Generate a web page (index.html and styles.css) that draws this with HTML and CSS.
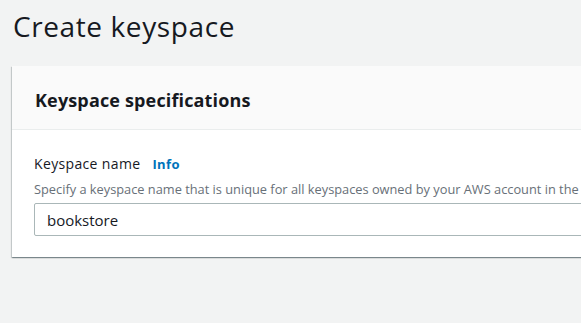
FILE: index.html
```html
<!DOCTYPE html>
<html>
<head>
<meta charset="utf-8">
<link rel="stylesheet" href="styles.css">
</head>
<body>
<div class="page">
  <h1 class="title">Create keyspace</h1>
  <div class="card">
    <div class="card-header"><h2>Keyspace specifications</h2></div>
    <div class="card-body">
      <div class="label-row"><span class="label">Keyspace name</span><a class="info">Info</a></div>
      <div class="desc">Specify a keyspace name that is unique for all keyspaces owned by your AWS account in the</div>
      <div class="input">bookstore</div>
    </div>
  </div>
</div>
</body>
</html>
```
FILE: styles.css
```css
html, body { margin: 0; padding: 0; }
body {
  background: #f2f3f3;
  font-family: "Open Sans", "Noto Sans", sans-serif;
  color: #16191f;
  width: 581px;
  height: 323px;
  overflow: hidden;
}
.page { padding: 6px 0 0 12px; }
.title {
  margin: 0 0 0 1px;
  font-size: 28px;
  font-weight: 400;
  line-height: 40px;
  letter-spacing: 0.6px;
}
.card {
  margin-top: 20px;
  width: 620px;
  background: #fff;
  box-shadow: 0 1px 1px 0 rgba(0,28,36,0.3), 1px 1px 1px 0 rgba(0,28,36,0.15), -1px 1px 1px 0 rgba(0,28,36,0.15);
}
.card-header {
  background: #fafafa;
  border-bottom: 1px solid #eaeded;
  box-sizing: content-box;
  display: flex;
  align-items: center;
  padding: 4px 0 0 23px;
  height: 59px;
}
.card-header h2 {
  margin: 0;
  font-size: 18px;
  font-weight: 700;
  line-height: 24px;
  letter-spacing: 0.15px;
}
.card-body { padding: 23px 0 21px 22px; }
.label-row { display: flex; align-items: baseline; gap: 12px; }
.label { font-size: 14px; line-height: 22px; letter-spacing: 0.35px; }
.info { font-size: 13px; font-weight: 700; color: #0073bb; letter-spacing: 0.4px; }
.desc {
  font-size: 12.8px;
  color: #687078;
  line-height: 18px;
  margin-top: 5px;
  white-space: nowrap;
}
.input {
  margin-top: 5px;
  border: 1px solid #aab7b8;
  border-radius: 2px;
  box-sizing: border-box;
  height: 33px;
  padding-left: 12px;
  font-size: 15px;
  line-height: 32px;
  color: #16191f;
}
```
